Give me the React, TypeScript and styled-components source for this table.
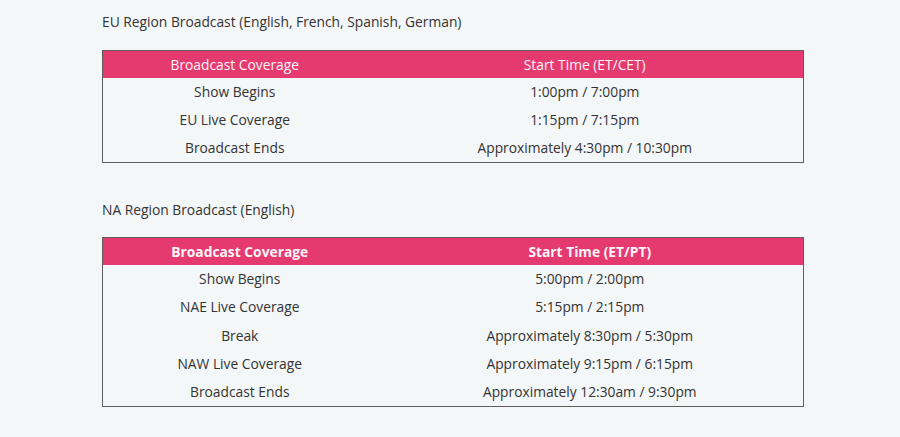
import React from "react";
import styled, { createGlobalStyle } from "styled-components";

const Global = createGlobalStyle`
  html, body {
    margin: 0;
    padding: 0;
    background: #f4f7f8;
  }
  body {
    font-family: "Open Sans", "Noto Sans", sans-serif;
    font-size: 13.8px;
    color: #333;
  }
`;

const Page = styled.main`
  width: 702px;
  padding: 11px 0 0 102px;
`;

const Section = styled.section`
  margin-bottom: 36px;
`;

const Title = styled.p<{ $gap: number }>`
  margin: 0 0 ${(p) => p.$gap}px;
  line-height: 21px;
  font-size: 13.8px;
  color: #333;
`;

const Table = styled.table`
  width: 702px;
  border-collapse: collapse;
  border: 1px solid #5f5f5f;
  table-layout: fixed;
`;

const HeadCell = styled.th<{ $bold: boolean }>`
  background: #e43a70;
  color: #fff4f8;
  font-weight: ${(p) => (p.$bold ? 700 : 400)};
  text-align: center;
  height: 27.5px;
  padding: 0 8px;
  line-height: 20px;
  box-sizing: border-box;
`;

const Cell = styled.td`
  text-align: center;
  height: 28.2px;
  padding: 0 8px;
  line-height: 20px;
  box-sizing: border-box;
  color: #333;
`;

type Broadcast = {
  title: string;
  gap: number;
  timeHeader: string;
  bold: boolean;
  firstCol: number;
  rows: [string, string][];
};

const broadcasts: Broadcast[] = [
  {
    title: "EU Region Broadcast (English, French, Spanish, German)",
    gap: 18,
    timeHeader: "Start Time (ET/CET)",
    bold: false,
    firstCol: 264,
    rows: [
      ["Show Begins", "1:00pm / 7:00pm"],
      ["EU Live Coverage", "1:15pm / 7:15pm"],
      ["Broadcast Ends", "Approximately 4:30pm / 10:30pm"],
    ],
  },
  {
    title: "NA Region Broadcast (English)",
    gap: 17,
    timeHeader: "Start Time (ET/PT)",
    bold: true,
    firstCol: 274,
    rows: [
      ["Show Begins", "5:00pm / 2:00pm"],
      ["NAE Live Coverage", "5:15pm / 2:15pm"],
      ["Break", "Approximately 8:30pm / 5:30pm"],
      ["NAW Live Coverage", "Approximately 9:15pm / 6:15pm"],
      ["Broadcast Ends", "Approximately 12:30am / 9:30pm"],
    ],
  },
];

export default function App() {
  return (
    <>
      <Global />
      <Page>
        {broadcasts.map((b) => (
          <Section key={b.title}>
            <Title $gap={b.gap}>{b.title}</Title>
            <Table>
              <colgroup>
                <col style={{ width: b.firstCol }} />
                <col />
              </colgroup>
              <thead>
                <tr>
                  <HeadCell $bold={b.bold}>Broadcast Coverage</HeadCell>
                  <HeadCell $bold={b.bold}>{b.timeHeader}</HeadCell>
                </tr>
              </thead>
              <tbody>
                {b.rows.map(([name, time]) => (
                  <tr key={name}>
                    <Cell>{name}</Cell>
                    <Cell>{time}</Cell>
                  </tr>
                ))}
              </tbody>
            </Table>
          </Section>
        ))}
      </Page>
    </>
  );
}
